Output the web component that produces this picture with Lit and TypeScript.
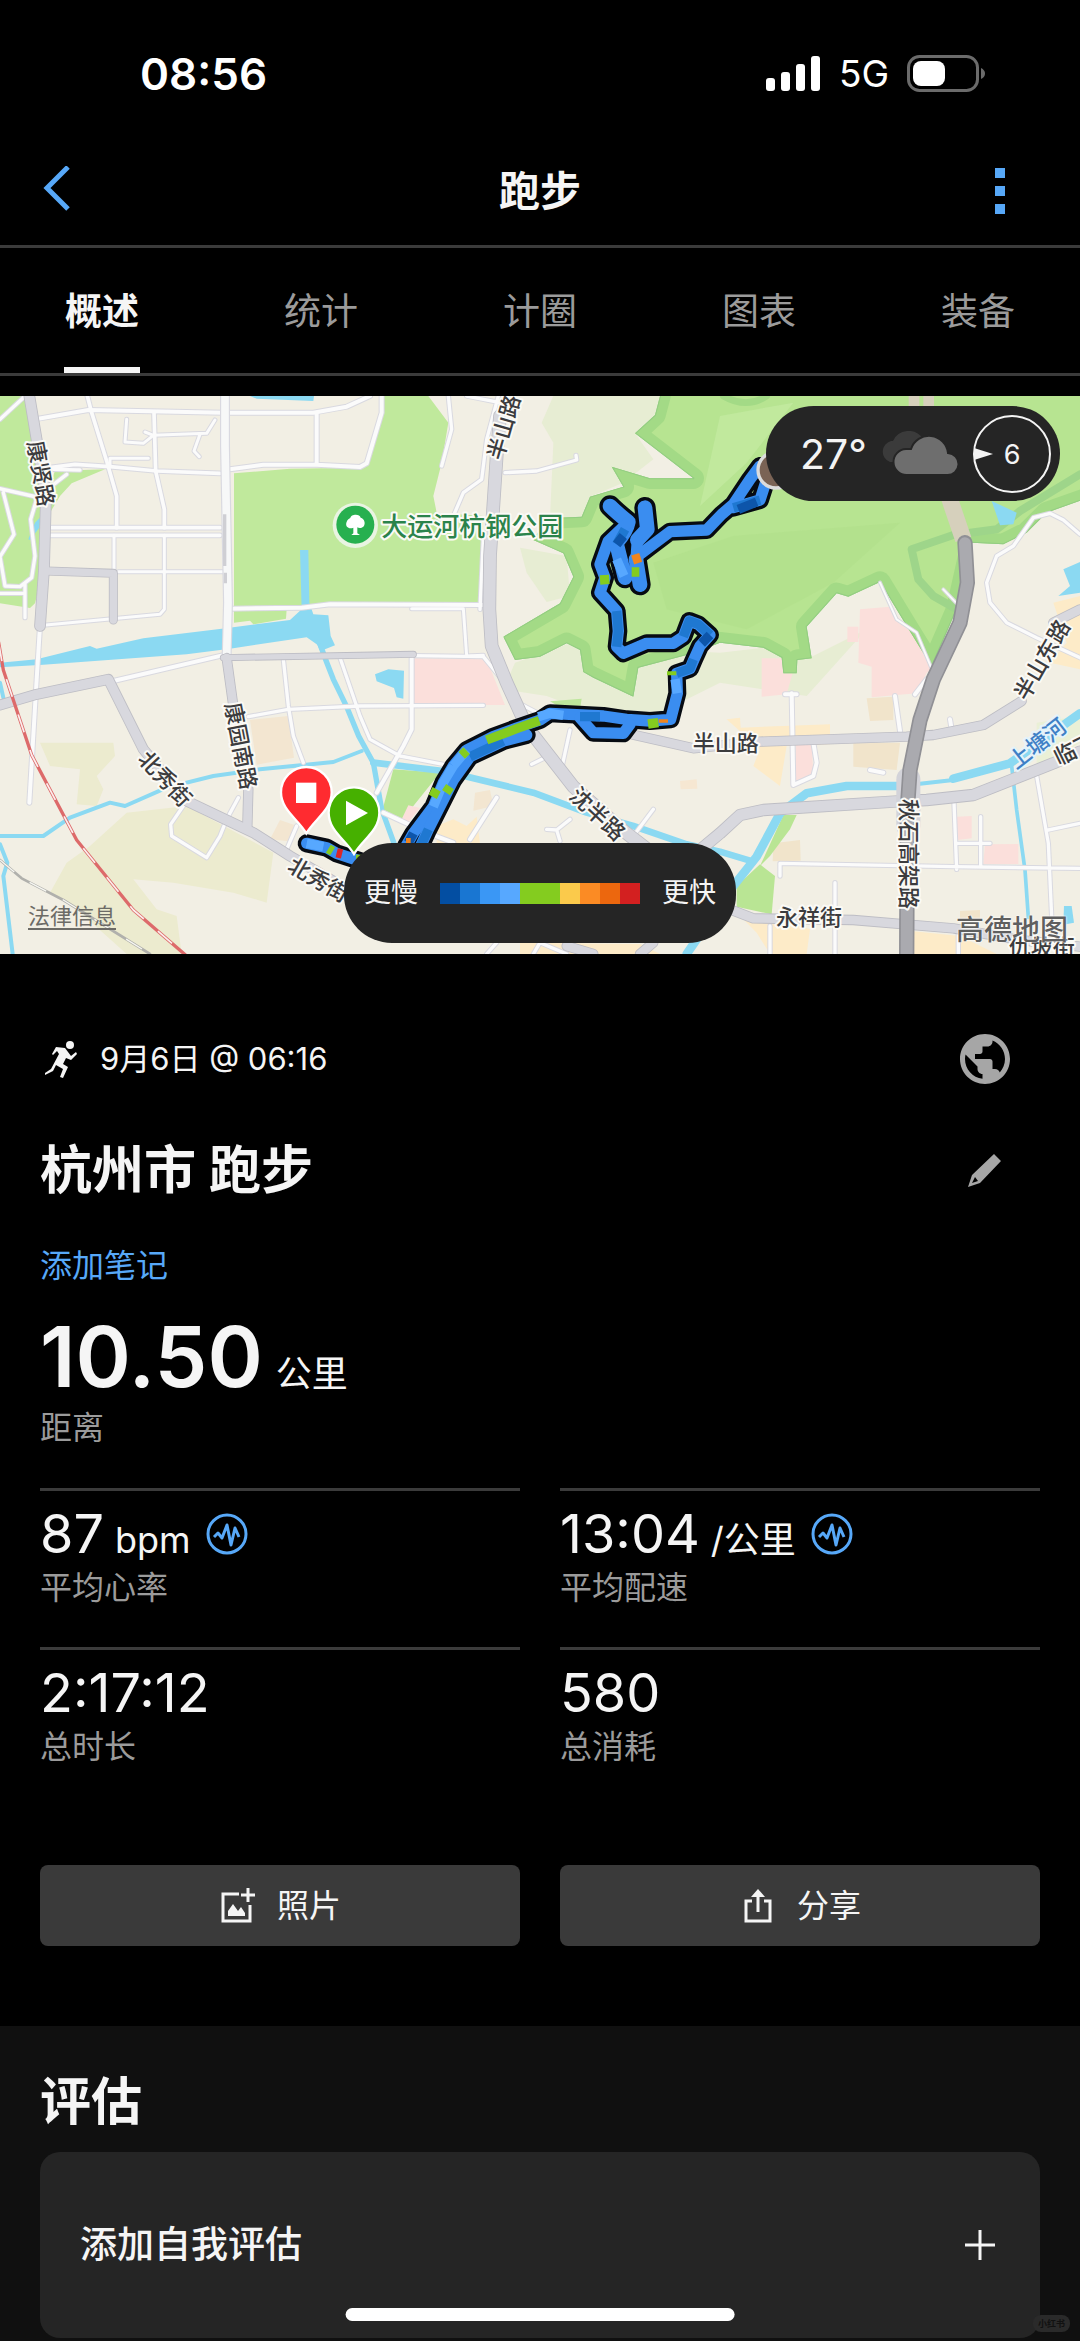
import { LitElement, html, svg, css } from "lit";
import { customElement, property, state } from "lit/decorators.js";

/* ---------- map data: 3 map units per CSS pixel ---------- */

const areas: Array<[string, string]> = [
  ["#c0e99c", "M0 0H75L100 130 125 300 130 520 105 622 90 636 0 622Z"],
  ["#c0e99c", "M165 225L315 220 215 262 180 300 150 350 140 290Z"],
  ["#ecebcf", "M120 1040L340 1040 345 1080 290 1140 310 1180 290 1230 230 1225 240 1120 150 1110Z"],
  ["#ecebcf", "M200 1400L270 1350 380 1250 560 1230 820 1370 800 1520 700 1490 520 1460 400 1450 470 1540 530 1560 545 1674 380 1674 230 1540 150 1490Z"],
  ["#f3e6d1", "M750 972L865 960 882 1085 770 1106Z"],
  ["#f3e6d1", "M810 1330L840 1272 892 1290 866 1336Z"],
  ["#c0e99c", "M702 232L870 218 1080 215 1100 205 1145 50 1148 0H1285L1345 80 1325 200 1300 300 1310 350 1450 360 1440 622 980 625 860 640 858 668 760 685 750 674 702 680Z"],
  ["#e7edd3", "M1660 0H1980L1965 57 1905 112 1960 190 1870 260 1770 302 1745 362 1650 366 1660 140 1625 80Z"],
  ["#e7edd3", "M1560 455L1700 480 1710 600 1640 618 1580 530Z"],
  ["#e7edd3", "M1545 800L1700 745 2160 770 2290 755 2420 790 2600 700 2420 900 2160 860 1960 960 1800 960 1640 900 1510 880Z"],
  ["#fbdfdb", "M1240 787L1460 790 1515 927H1240Z"],
  ["#bde69b", "M1650 916L1745 908 1740 940 1700 946Z"],
  ["#b9e594", "M1180 1120L1320 1130 1240 1230 1210 1270 1148 1240Z"],
  ["#fbdfdb", "M1225 1228L1260 1236 1215 1290 1205 1270Z"],
  ["#fdebc8", "M1310 1290L1360 1270 1400 1290 1430 1262 1440 1345H1310Z"],
  ["#f3e6d1", "M1425 1190L1470 1182 1480 1230 1420 1244Z"],
  ["#f6e7d2", "M2040 1155L2090 1150 2092 1178 2042 1180Z"],
  ["#fdebc8", "M2180 970L2220 965 2222 995 2490 985 2490 1045 2360 1050 2340 1170 2260 1110 2280 1060Z"],
  ["#fbdfdb", "M2285 787H2350L2378 830 2360 895 2285 902Z"],
  ["#fbdfdb", "M2580 640L2670 632 2700 672 2750 722 2800 815 2780 830 2750 892 2615 904 2615 812 2575 800Z"],
  ["#fbdfdb", "M2542 692H2575V738H2542Z"],
  ["#fbdfdb", "M2387 1037L2435 1035 2440 1140 2387 1155Z"],
  ["#f1e4cb", "M2560 1042L2700 1040 2690 1122 2560 1112Z"],
  ["#f1e4cb", "M2600 907L2680 902 2680 972 2610 975Z"],
  ["#f1e4cb", "M2320 1342L2400 1332 2402 1394 2318 1396Z"],
  ["#b9e594", "M2350 1257L2390 1257 2370 1300 2310 1380 2280 1410Z"],
  ["#b9e594", "M2280 1405L2325 1440 2315 1555 2210 1532 2210 1470Z"],
  ["#fbdfdb", "M2870 1262L2915 1260 2915 1327 2872 1332Z"],
  ["#fbdfdb", "M2955 1345L3055 1344V1404H2950Z"],
  ["#fdebc8", "M2230 1570L2310 1560 2430 1600 2420 1674H2310L2270 1610Z"],
  ["#fdebc8", "M2740 1606L2880 1620 2990 1674H2740Z"],
  ["#fdebc8", "M1560 1640L1920 1644 1980 1674H1560Z"],
  ["#f1e4cb", "M2880 1545L2940 1542V1575H2880Z"],
  ["#fdebc8", "M3160 620L3240 600V820L3150 800 3200 740Z"],
  ["#eaf0d6", "M3110 980L3240 960V1040L3110 1120Z"],
];

const mountain =
  "M1980 -40L1980 0 1965 57 1905 112 2080 247 1950 247 1835 212 1870 272 1770 302 1745 362 1640 367 1600 432 1690 472 1720 542 1680 622 1510 722 1545 792 1620 782 1700 742 1740 762 1750 828 1780 845 1900 902 1915 815 2080 772 2160 740 2290 755 2345 785 2350 832H2390L2392 792 2435 787 2420 692 2510 592 2545 602 2640 558 2720 690 2795 812 2870 640 2915 440 3010 445 3080 410 3140 350 3280 300V-40Z";

const waters = [
  "M0 800L110 790 270 750 290 758 430 727 665 698 870 672 905 640 900 462H925L928 620 940 655 985 658 992 720 1005 748 962 765 950 745 920 724 690 758 560 775 130 806 0 814Z",
  "M750 0H942L940 15 770 8Z",
  "M1125 835L1165 820 1212 824 1210 908 1190 904 1182 876 1130 856Z",
  "M2975 315L3050 350 3040 385 3000 388Z",
  "M3190 520L3240 498V590L3175 600 3210 570Z",
  "M3192 1530H3215L3222 1580 3190 1586Z",
  "M85 430L105 380 122 362 118 395 90 432Z",
];

const streams: Array<[number, string]> = [
  [16, "M962 750Q980 800 1000 850L1040 932 1076 1020 1120 1100 1145 1240 1185 1350"],
  [12, "M0 1320H130L210 1265 330 1220 375 1230 500 1175 640 1140 780 1120 1000 1098 1085 1065"],
  [12, "M0 860L10 905M0 1345L22 1400 10 1440 38 1674"],
  [20, "M1120 1100L1330 1125 1600 1190 1760 1250 1900 1290 2060 1345 2160 1367 2260 1397"],
  [26, "M3240 952L3030 1102 2860 1148"],
  [12, "M2980 1120L2860 1152 2700 1170"],
  [26, "M2700 1170L2540 1170 2420 1192 2340 1252 2270 1382 2200 1470 2060 1674"],
  [11, "M3035 1110L3050 1242 3075 1422 3085 1564"],
];

const lanes: Array<[number, string]> = [
  [12, "M115 68L265 42 670 50 940 50 1040 32 1110 0"],
  [11, "M262 0L275 50 320 195 350 300V395M462 50L467 225 493 340V395"],
  [11, "M150 395H660M150 418H660M150 215L225 205 330 212 470 225 660 232"],
  [9, "M330 212V187H445M380 70L375 138 430 142 460 118 620 112 645 72M600 115L582 165 598 182M435 108L460 118"],
  [9, "M342 418V520M493 418V640L480 655 130 688M355 527H670"],
  [12, "M690 220L790 206H950L1080 213 1100 202 1145 50V0M950 50V206"],
  [10, "M0 70L70 5M0 278L110 303M10 290L42 415 0 482 15 570 60 572 95 545 105 480 92 370 110 310M75 560V665M0 592H75M160 220L240 222M165 262L200 235"],
  [12, "M690 638L905 635 990 625 1450 627"],
  [9, "M1235 638H1390L1400 780 1450 778"],
  [10, "M850 790L865 930 880 1020 910 1100M1020 785L1080 960 1110 1030 1200 1080 1330 1105"],
  [12, "M120 690L110 850 88 1220M680 775L340 855"],
  [10, "M560 1215L512 1285 515 1320 620 1385 660 1320 680 1270 715 1205M860 1360L890 1290M745 962L865 940 1080 930 1450 928"],
  [12, "M1235 787V1000L1210 1050 1130 1190M1150 1250L1280 1310 1360 1340M1410 1330L1490 1205"],
  [10, "M1495 0L1460 130 1445 250 1390 290 1360 360M1450 430L1440 640M1345 0L1355 100 1325 210M1400 0L1500 20"],
  [10, "M1515 230L1610 225 1730 192 1728 178M1240 779L1450 782 1530 880"],
  [10, "M1685 1117L1710 1002M1595 1105L1635 1085M1900 1320L1960 1240M1550 918L1620 955M1680 1335L1670 1302 1640 1300M1670 1302L1710 1270"],
  [12, "M2375 892L2380 1167 2440 1140 2450 1100 2440 1040M2355 895H2390M2685 900L2700 1005M2745 895L2780 850M2610 1122L2650 1130M2850 970L2855 1000"],
  [10, "M2340 1440V1402L2860 1412 3240 1417M2505 1460V1674M2310 1590V1674M2862 1220L2870 1420M2942 1262V1412M2870 1342H2970M3110 1140L3145 1342 3155 1562M3145 1302L3240 1282M2875 1600V1674"],
  [10, "M3240 415L3190 372 3150 352 3100 365 3040 450 2990 480 2960 560 2970 620 3020 680 3110 725 3240 785"],
  [6, "M2640 560L2690 670 2750 710 2800 830M2830 580L2870 622"],
  [10, "M1460 1674L1490 1640M1600 1674L1620 1640 1700 1674"],
];

const mainRoads: Array<[number, string]> = [
  [30, "M88 0L125 220 138 300 132 520 120 690"],
  [22, "M140 525L340 532V672"],
  [28, "M0 927L110 895 325 850 430 1060 560 1215 760 1310 870 1380 1060 1490"],
  [26, "M680 786L700 930 745 1180 742 1290"],
  [16, "M670 785L1080 778 1240 775"],
  [36, "M1500 60L1490 180 1470 480 1468 640 1475 750 1520 860 1580 992 1720 1172 1880 1312 1960 1374"],
  [26, "M1880 1012L2080 1057 2280 1037 2720 1022 2800 1017 2950 987 3065 915"],
  [26, "M3160 680L3240 640"],
  [32, "M2090 1370L2160 1312 2220 1257 2290 1242 2680 1217 2780 1212 2920 1197 3160 1102 3240 1067"],
  [26, "M2190 1540L2260 1567 2560 1572 2860 1597 3060 1632 3240 1652"],
  [26, "M1700 1650L1780 1674M1920 1674L1960 1640"],
];

const track = {
  wide: "M1830 330Q1850 350 1885 378Q1880 405 1850 440M1935 335L1942 400 1912 432M1850 445L1875 545M1908 490L1920 566",
  outline: [
    "M1885 378L1825 435 1800 505 1815 545 1800 590 1850 645 1855 705 1850 752 1870 772 1940 742 2020 742 2050 722 2068 675 2095 685 2130 717 2100 750 2082 790 2070 818 2030 832 2032 892 2012 970 1950 975 1880 970 1810 960 1650 952 1620 972 1550 996 1480 1022 1400 1062 1360 1110 1330 1160 1300 1232 1240 1312 1218 1350",
    "M1912 432L1908 490",
    "M1920 475L2010 407 2120 402 2165 355 2200 325 2250 250 2280 210M2200 335L2280 312 2300 250",
    "M1740 965L1780 1010 1870 1012 1890 985M1580 1017L1510 1035 1410 1082 1360 1152 1285 1300 1262 1350",
    "M920 1342L980 1355 1010 1372 1080 1395",
  ],
  hues: [
    ["#1f78d1", "M1850 645L1855 705 1850 752M2050 722L2068 675 2095 685 2130 717M2080 790L2070 818 2030 832M1740 962H1800M1510 1035L1410 1082M2200 335L2280 312M1850 445L1875 400M1262 1350L1285 1300"],
    ["#0d55aa", "M2130 717L2105 742M1870 420L1850 445M2215 340L2270 318M1240 1312L1225 1340"],
    ["#57a8ff", "M1360 1110L1330 1160 1300 1232M1400 1062L1360 1110M920 1342L970 1352M1850 490L1872 540M1615 962L1650 952 1690 958M2032 892L2025 850"],
    ["#84cc1f", "M1618 974L1550 998 1460 1032M1975 980L1944 984M1800 552L1828 550M1895 528H1918M1385 1078L1400 1064M1350 1172L1338 1190M1310 1180L1298 1202M985 1358L998 1366M1068 1390H1090M2015 838V826"],
    ["#f0851f", "M1898 492L1922 484M1990 980V970M1218 1340H1232"],
    ["#dc2626", "M1010 1370L1026 1374"],
  ],
};

type MapLabel = { text: string; x: number; y: number; angle: number; kind?: string };

const labels: MapLabel[] = [
  { text: "康贤路", x: 82, y: 139, angle: 80 },
  { text: "康园南路", x: 674, y: 925, angle: 79 },
  { text: "秋石高架路", x: 2702, y: 1209, angle: 90 },
  { text: "半山路", x: 1507, y: 196, angle: -74 },
  { text: "半山路", x: 2078, y: 1066, angle: 0 },
  { text: "永祥街", x: 2328, y: 1588, angle: 0 },
  { text: "北秀街", x: 410, y: 1092, angle: 47 },
  { text: "北秀街", x: 858, y: 1422, angle: 30 },
  { text: "沈半路", x: 1704, y: 1204, angle: 43 },
  { text: "半山东路", x: 3081, y: 918, angle: -60 },
  { text: "临丁", x: 3176, y: 1109, angle: -26 },
  { text: "仇坡街", x: 3026, y: 1678, angle: 0 },
  { text: "上塘河", x: 3049, y: 1122, angle: -38, kind: "river" },
];

@customElement("route-map")
class RouteMap extends LitElement {
  static styles = css`
    :host { display: block; position: relative; overflow: hidden; background: #f2efe4; }
    .canvas { display: block; width: 100%; height: auto; }
    .line { fill: none; stroke-linejoin: round; stroke-linecap: round; }
    .flat { stroke-linecap: butt; }
    .label {
      font-family: Inter, "Noto Sans CJK SC", sans-serif;
      font-size: 66px; font-weight: 500; fill: #3c3c3e;
      stroke: #fbfaf6; stroke-width: 12px; stroke-linejoin: round; paint-order: stroke;
    }
    .river { fill: #3f80c6; stroke: #e4f3fa; }
    .park { font-size: 78px; fill: #2b834b; }
    .legal, .brand, .weather, .legend { position: absolute; }
    .legal { left: 28px; bottom: 22px; font-size: 22px; line-height: 32px; color: #6c6b66; text-decoration: underline; text-underline-offset: 4px; }
    .brand { right: 12px; bottom: 6px; font-size: 28px; line-height: 36px; font-weight: 500; color: #5f5f5f; text-shadow: 0 0 2px #fff, 0 0 2px #fff; }
    .weather {
      top: 10px; right: 20px; height: 95px; padding: 0 9px 0 34px; border-radius: 48px;
      display: flex; align-items: center; background: #252525; color: #f4f4f4;
    }
    .degrees { font-size: 41px; line-height: 56px; width: 79px; }
    .cloud { width: 80px; height: 46px; margin-right: 14px; display: block; }
    .wind { width: 78px; height: 78px; display: block; }
    .windspeed { font-family: Inter, sans-serif; font-size: 27px; fill: #f4f4f4; text-anchor: middle; }
    .legend {
      left: 50%; bottom: 11px; transform: translateX(-50%); height: 100px; padding: 0 20px; border-radius: 48px;
      display: flex; align-items: center; gap: 22px; white-space: nowrap;
      background: #252525; color: #f4f4f4; font-size: 27px; line-height: 40px;
    }
    .scale { display: flex; }
    .step { width: 20px; height: 21px; }
  `;

  private scale = ["#034ea2", "#1976d2", "#3a97f5", "#57a8ff", "#84cc1f", "#84cc1f", "#fbca4b", "#fb8b24", "#ec670e", "#d32020"];

  private line(width: number, d: string, color: string, cap = "line") {
    return svg`<path class=${cap} d=${d} stroke=${color} stroke-width=${width}></path>`;
  }

  render() {
    return html`
      <svg class="canvas" viewBox="0 0 3240 1674" role="img" aria-label="路线地图">
        <rect width="3240" height="1674" fill="#f2efe4"></rect>
        ${areas.map(([fill, d]) => svg`<path d=${d} fill=${fill}></path>`)}
        <clipPath id="hill"><path d=${mountain}></path></clipPath>
        <g clip-path="url(#hill)">
          <path d=${mountain} fill="#b7e491"></path>
          <path d="M2200 420L2700 380 2500 560 2240 700 2000 640 1960 500Z" fill="#b0df8a" opacity=".6"></path>
          <path d="M2160 60L2380 20 2240 200 2100 330Z" fill="#c3eaa0" opacity=".8"></path>
          ${this.line(64, mountain, "#a3da86")}
          ${this.line(6, mountain, "#93cd83")}
          ${this.line(24, "M3240 235L3060 345 2990 400 2860 417 2735 460 2755 550 2800 600 2870 640", "#9ed58a")}
          ${this.line(20, "M2170 0Q2240 40 2300 0", "#a3da86")}
        </g>
        ${waters.map((d) => svg`<path d=${d} fill="#8bd9f2"></path>`)}
        ${streams.map(([w, d]) => this.line(w, d, "#8bd9f2"))}
        ${this.line(32, "M2742 0V90M2786 0V90", "#d6d0bc", "line flat")}
        ${this.line(50, "M2840 280L2856 330 2890 430", "#d6d0bc", "line flat")}
        ${lanes.map(([w, d]) => this.line(w + 6, d, "#d9d9e0"))}
        ${lanes.map(([w, d]) => this.line(w, d, "#fbfbfb"))}
        ${this.line(30, "M675 0V150L684 620 680 780", "#d9d9e0", "line flat")}
        ${this.line(23, "M675 0V150L684 620 680 780", "#f7f8f8", "line flat")}
        ${this.line(10, "M674 355V510M676 530V562", "#cfcfd4", "line flat")}
        ${mainRoads.map(([w, d]) => this.line(w + 5, d, "#bdbdc4"))}
        ${mainRoads.map(([w, d]) => this.line(w, d, "#d8d8de"))}
        ${this.line(72, "M2725 1150V1290", "#d3d3d9")}
        ${this.line(46, "M2895 440L2902 560 2880 680 2800 850 2760 972 2730 1122 2722 1240 2720 1700", "#909095")}
        ${this.line(36, "M2895 442L2902 560 2880 680 2800 850 2760 972 2730 1122 2722 1240 2720 1700", "#aaaaaf")}
        ${this.line(10, "M-4 740L10 822 95 1077 230 1332 400 1542 560 1680", "#dd6a6a")}
        <path class="line flat" d="M-4 740L10 822 95 1077 230 1332 400 1542 560 1680" stroke="#fbeeee" stroke-width="5" stroke-dasharray="56 56"></path>
        ${this.line(8, "M0 1392L65 1447 190 1512 450 1674", "#b0b0ac")}
        <path class="line flat" d="M0 1392L65 1447 190 1512 450 1674" stroke="#f7f7f2" stroke-width="4" stroke-dasharray="56 56"></path>

        ${labels.map(
          (l) => svg`<text class="label ${l.kind ?? ""}"
            transform="translate(${l.x} ${l.y}) rotate(${l.angle})">${l.text}</text>`
        )}
        <circle cx="1066" cy="388" r="68" fill="#e9f4e2"></circle>
        <circle cx="1066" cy="386" r="57" fill="#27b04f"></circle>
        <path d="M1060 412V395C1046 400 1036 392 1039 380C1042 370 1048 368 1051 366C1052 354 1080 352 1082 365C1094 368 1098 384 1090 392C1084 397 1076 396 1072 394V412L1080 417H1054Z" fill="#fff"></path>
        <text class="label park" x="1144" y="420">大运河杭钢公园</text>

        ${this.line(64, track.wide, "#070b12")}
        ${track.outline.map((d) => this.line(54, d, "#070b12"))}
        ${this.line(44, track.wide, "#3a8df0")}
        ${track.outline.map((d) => this.line(34, d, "#3a8df0"))}
        ${track.hues.map(([c, d]) => this.line(28, d, c, "line flat"))}

        <circle cx="2328" cy="222" r="54" fill="#7a6355" stroke="#dcdcdc" stroke-width="10"></circle>
        <path d="M1062 1374C1036 1330 986 1304 986 1250A76 76 0 0 1 1138 1250C1138 1304 1088 1330 1062 1374Z" fill="#46b000" stroke="#fff" stroke-width="7"></path>
        <path d="M1038 1214L1104 1251 1038 1288Z" fill="#fff"></path>
        <path d="M919 1312C893 1268 843 1242 843 1189A76 76 0 0 1 995 1189C995 1242 945 1268 919 1312Z" fill="#ff2b30" stroke="#fff" stroke-width="7"></path>
        <rect x="888" y="1160" width="61" height="61" fill="#fff"></rect>
      </svg>
      <a class="legal" href="#legal">法律信息</a>
      <span class="brand">高德地图</span>
      <div class="weather">
        <span class="degrees">27°</span>
        <svg class="cloud" viewBox="0 0 80 46" aria-hidden="true">
          <path d="M11 31A11 11 0 0 1 12 10H14A17 17 0 0 1 44 8L30 31Z" fill="#3b3b3b"></path>
          <path d="M28 44A13 13 0 0 1 27 18H32A19 19 0 0 1 69 22A11 11 0 0 1 68 44Z" fill="#6e6e6e" stroke="#252525" stroke-width="2"></path>
        </svg>
        <svg class="wind" viewBox="0 0 78 78" role="img" aria-label="风速 6">
          <circle cx="39" cy="39" r="38" fill="none" stroke="#f4f4f4" stroke-width="2"></circle>
          <path d="M1 33L20 39 1 45Z" fill="#f4f4f4"></path>
          <text class="windspeed" x="39" y="49">6</text>
        </svg>
      </div>
      <div class="legend">
        <span>更慢</span>
        <div class="scale">${this.scale.map((c) => html`<div class="step" style="background:${c}"></div>`)}</div>
        <span>更快</span>
      </div>
    `;
  }
}

@customElement("metric-cell")
class MetricCell extends LitElement {
  static styles = css`
    :host { display: flex; flex-direction: column; gap: 4px; padding: 13px 0 39px; border-top: 3px solid #3b3b3b; }
    .row { display: flex; align-items: center; height: 60px; }
    .figure { font-size: 54px; line-height: 60px; color: #f5f5f5; white-space: nowrap; }
    .unit { margin-left: 11px; font-size: 36px; line-height: 40px; }
    .info { margin-left: 15px; padding: 0; border: 0; background: none; line-height: 0; }
    .pulse { width: 42px; height: 42px; }
    .caption { font-size: 32px; line-height: 40px; color: #9b9b9b; }
  `;
  @property() value = "";
  @property() unit = "";
  @property() caption = "";

  render() {
    return html`
      <div class="row">
        <span class="figure">${this.value}${this.unit ? html`<span class="unit">${this.unit}</span>` : ""}</span>
        ${this.unit
          ? html`<button class="info" aria-label="${this.caption}详情">
              <svg class="pulse" viewBox="0 0 42 42" fill="none" stroke="#57a8f8">
                <circle cx="21" cy="21" r="19" stroke-width="3"></circle>
                <path d="M8 24L12 20 16 25 21 12 25 32 29 15 33 24" stroke-width="3" stroke-linejoin="round"></path>
              </svg>
            </button>`
          : ""}
      </div>
      <span class="caption">${this.caption}</span>
    `;
  }
}

@customElement("app-root")
class AppRoot extends LitElement {
  static styles = css`
    :host {
      display: block; position: relative; overflow: hidden; min-height: 100vh; background: #000; color: #f5f5f5;
      font-family: Inter, "Noto Sans CJK SC", sans-serif;
    }
    button { margin: 0; padding: 0; border: 0; background: none; color: inherit; font: inherit; }
    svg { display: block; }
    h1, h2, p { margin: 0; }

    .status { display: flex; align-items: center; justify-content: space-between; height: 124px; padding: 12px 94px 0 140px; color: #fff; }
    .clock { font-size: 44px; line-height: 56px; font-weight: 600; }
    .signals { display: flex; align-items: center; }
    .bars { width: 55px; height: 36px; }
    .network { margin: 0 18px; font-size: 37px; line-height: 48px; }
    .battery { width: 79px; height: 38px; }

    .header { display: grid; grid-template-columns: 1fr auto 1fr; align-items: center; height: 109px; padding: 0 40px; border-bottom: 3px solid #3b3b3b; }
    .back { justify-self: start; }
    .back svg { width: 34px; height: 50px; }
    .heading { font-size: 41px; line-height: 56px; font-weight: 600; }
    .more { justify-self: end; width: 80px; display: flex; justify-content: center; }
    .more svg { width: 10px; height: 46px; }

    .tabs { display: flex; justify-content: space-between; height: 125px; padding: 0 64px; border-bottom: 3px solid #3b3b3b; margin-bottom: 20px; }
    .tab { padding: 3px 1px 0; border-bottom: 6px solid transparent; font-size: 37px; color: #9b9b9b; }
    .tab.active { color: #f5f5f5; font-weight: 600; border-color: #f5f5f5; }

    .details { padding: 75px 40px 80px; }
    .line { display: flex; align-items: center; height: 60px; }
    .runner { width: 40px; height: 40px; margin-right: 20px; }
    .date { flex: 1; font-size: 31px; line-height: 40px; }
    .tool { display: flex; justify-content: center; align-items: center; width: 60px; height: 60px; margin-right: 25px; }
    .globe { width: 60px; height: 60px; }
    .pencil { width: 44px; height: 44px; }
    .name { flex: 1; font-size: 52px; line-height: 60px; font-weight: 600; }
    .titleline { margin-top: 52px; }
    .note { display: block; width: max-content; margin-top: 45px; font-size: 32px; line-height: 40px; color: #57a8f8; text-decoration: none; }
    .distance { display: flex; align-items: baseline; height: 84px; margin-top: 29px; font-size: 84px; line-height: 84px; font-weight: 600; }
    .distance .unit { margin-left: 13px; font-size: 36px; line-height: 40px; font-weight: 400; }
    .caption { margin-top: 9px; font-size: 32px; line-height: 40px; color: #9b9b9b; }
    .grid { display: grid; grid-template-columns: 1fr 1fr; column-gap: 40px; margin-top: 40px; }
    .actions { display: grid; grid-template-columns: 1fr 1fr; gap: 40px; margin-top: 59px; }
    .action { display: flex; align-items: center; justify-content: center; gap: 20px; height: 81px; border-radius: 8px; background: #3a3a3a; font-size: 32px; line-height: 40px; }
    .action svg { width: 38px; height: 38px; }

    .review { padding: 46px 40px 3px; background: #101010; }
    .review h2 { font-size: 51px; line-height: 60px; font-weight: 600; }
    .card { display: flex; align-items: center; justify-content: space-between; width: 100%; height: 186px; margin-top: 20px; padding: 0 44px 0 40px; border-radius: 20px; background: #252525; font-size: 37px; line-height: 48px; font-weight: 500; }
    .card svg { width: 32px; height: 32px; }
    .home { position: absolute; left: 50%; bottom: 20px; width: 36%; height: 13px; transform: translateX(-50%); border-radius: 7px; background: #fff; }
    .mark { position: absolute; right: 10px; bottom: 9px; padding: 0 5px; border-radius: 8px; background: #2a2a2a; color: #111; font-size: 9px; line-height: 17px; font-weight: 700; }
  `;

  @state() private active = 0;
  private tabs = ["概述", "统计", "计圈", "图表", "装备"];

  render() {
    return html`
      <div class="status">
        <span class="clock">08:56</span>
        <div class="signals">
          <svg class="bars" viewBox="0 0 55 36" fill="#fff" aria-hidden="true">
            <rect x="0" y="22" width="9" height="13" rx="3"></rect>
            <rect x="15" y="16" width="9" height="19" rx="3"></rect>
            <rect x="30" y="8" width="9" height="27" rx="3"></rect>
            <rect x="45" y="0" width="9" height="35" rx="3"></rect>
          </svg>
          <span class="network">5G</span>
          <svg class="battery" viewBox="0 0 79 38" aria-hidden="true">
            <rect x="1.5" y="1.5" width="69" height="34" rx="11" fill="none" stroke="#6b6b6b" stroke-width="3"></rect>
            <rect x="6" y="6" width="32" height="25" rx="8" fill="#fff"></rect>
            <path d="M74 13Q78 15 78 18.500Q78 22 74 24Z" fill="#6b6b6b"></path>
          </svg>
        </div>
      </div>
      <header class="header">
        <button class="back" aria-label="返回">
          <svg viewBox="0 0 34 50" fill="none" stroke="#57a8f8" stroke-width="5"><path d="M28 1L7 22 28 43"></path></svg>
        </button>
        <h1 class="heading">跑步</h1>
        <button class="more" aria-label="更多">
          <svg viewBox="0 0 10 46" fill="#57a8f8"><path d="M0 0H10V10H0ZM0 18H10V28H0ZM0 36H10V46H0Z"></path></svg>
        </button>
      </header>
      <nav class="tabs">
        ${this.tabs.map(
          (t, i) => html`<button class="tab ${i === this.active ? "active" : ""}" @click=${() => (this.active = i)}>${t}</button>`
        )}
      </nav>
      <route-map></route-map>
      <main class="details">
        <div class="line">
          <svg class="runner" viewBox="0 0 40 40" fill="#f5f5f5" aria-hidden="true">
            <circle cx="30" cy="6" r="4"></circle>
            <path d="M16 8L25 9 28 13 31 17 36 13 37 15 31 21 26 19 23 25 28 28 23 39 20 38 23 30 16 26 13 32 5 36 5 34 11 30 19 15 17 12 13 16 12 15Z"></path>
          </svg>
          <span class="date">9月6日 @ 06:16</span>
          <button class="tool" aria-label="公开">
            <svg class="globe" viewBox="0 0 24 24" fill="#a6a6a6"><path d="M12 2C6.480 2 2 6.480 2 12s4.480 10 10 10 10-4.480 10-10S17.520 2 12 2zm-1 17.930c-3.950-.49-7-3.850-7-7.930 0-.62.08-1.210.21-1.790L9 15v1c0 1.100.9 2 2 2v1.930zm6.900-2.540c-.26-.81-1-1.390-1.900-1.390h-1v-3c0-.55-.45-1-1-1H8v-2h2c.55 0 1-.45 1-1V7h2c1.100 0 2-.9 2-2v-.41c2.930 1.190 5 4.060 5 7.410 0 2.080-.8 3.970-2.100 5.390z"></path></svg>
          </button>
        </div>
        <div class="line titleline">
          <h2 class="name">杭州市 跑步</h2>
          <button class="tool" aria-label="编辑">
            <svg class="pencil" viewBox="0 0 44 44" fill="#a6a6a6"><path fill-rule="evenodd" d="M31 5L38 12 17 34 5 38 9 26ZM12 28L9 34 15 32Z"></path></svg>
          </button>
        </div>
        <a class="note" href="#note">添加笔记</a>
        <p class="distance">10.50<span class="unit">公里</span></p>
        <p class="caption">距离</p>
        <div class="grid">
          <metric-cell value="87" unit="bpm" caption="平均心率"></metric-cell>
          <metric-cell value="13:04" unit="/公里" caption="平均配速"></metric-cell>
          <metric-cell value="2:17:12" caption="总时长"></metric-cell>
          <metric-cell value="580" caption="总消耗"></metric-cell>
        </div>
        <div class="actions">
          <button class="action">
            <svg viewBox="0 0 38 38" fill="none" stroke="#f5f5f5" stroke-width="3">
              <path d="M20 7H4V34H31V18M29 1V15M22 8H36"></path>
              <path d="M9 29V24L14 17 19 24 22 20 26 26V29Z" fill="#f5f5f5" stroke="none"></path>
            </svg>
            照片
          </button>
          <button class="action">
            <svg viewBox="0 0 38 38" fill="none" stroke="#f5f5f5" stroke-width="3">
              <path d="M13 14H7V34H31V14H25M19 25V6"></path>
              <path d="M12 10L19 2 26 10Z" fill="#f5f5f5" stroke="none"></path>
            </svg>
            分享
          </button>
        </div>
      </main>
      <section class="review">
        <h2>评估</h2>
        <button class="card">
          添加自我评估
          <svg viewBox="0 0 32 32" stroke="#f5f5f5" stroke-width="3" aria-hidden="true"><path d="M16 1V31M1 16H31"></path></svg>
        </button>
      </section>
      <div class="home"></div>
      <span class="mark">小红书</span>
    `;
  }
}
